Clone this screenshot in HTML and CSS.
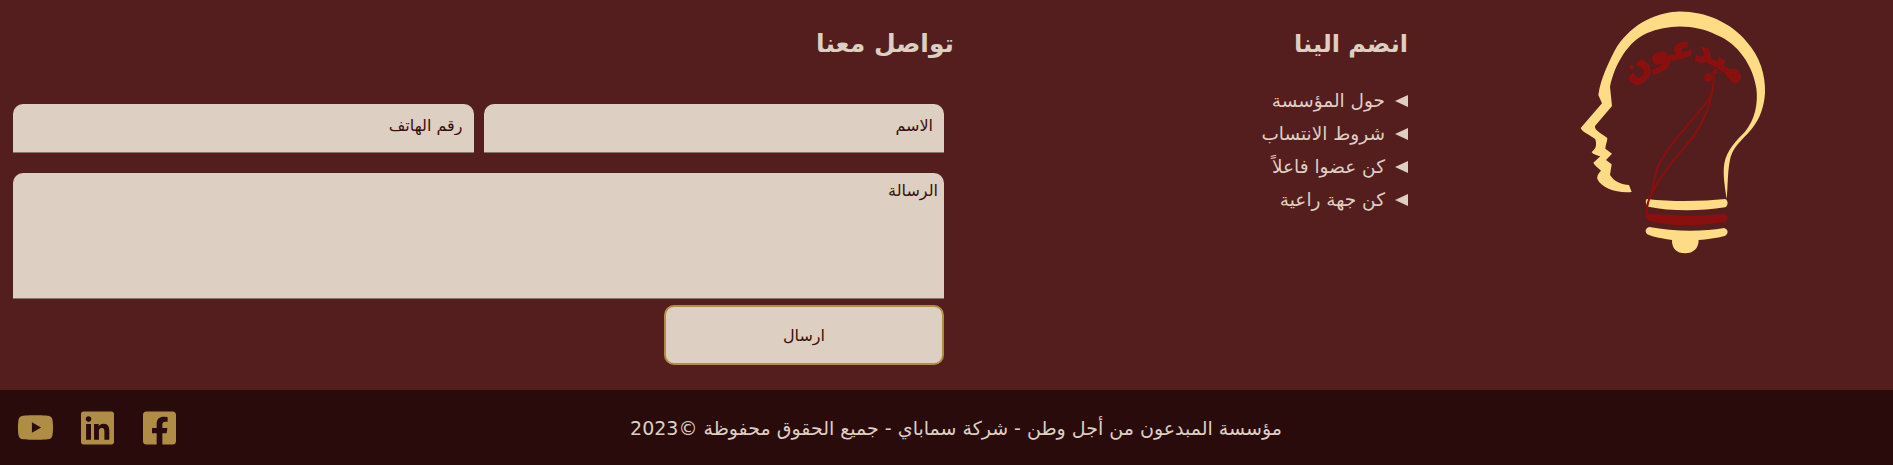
FILE: index.html
```html
<!DOCTYPE html>
<html lang="ar" dir="rtl">
<head>
    <meta charset="UTF-8">
    <title>المبدعون من أجل وطن</title>
    <link rel="stylesheet" href="styles.css">
</head>
<body>

<section class="top">
    <div class="logo-col">
        <svg class="logo" viewBox="0 0 900 810" width="300" height="270" role="img" aria-label="مبدعون">
            <path class="gold" d="M395 576C350 580 305 565 292 537C290 525 298 518 303 512C295 503 285 498 280 488L301 469C290 466 278 462 275 456C285 448 292 440 286 418C272 405 248 398 242 384L306 310L295 285C302 235 325 190 345 150C385 80 460 38 530 35C610 32 690 65 740 125C780 170 797 225 795 280C792 320 780 355 760 380C740 410 705 430 692 470C682 510 684 560 680 597C674 560 668 520 673 490C680 450 710 420 735 395C765 360 775 310 769 265C760 200 715 130 650 105C590 75 510 70 440 100C385 125 345 190 330 260L336 318L285 378C284 390 295 395 322 414C322 425 316 435 316 446L336 461L318 480L335 493L330 525C345 548 365 553 387 555Z"/>
            <path class="gold" d="M440 597C520 606 610 604 675 597C685 600 686 618 675 622C600 634 510 634 445 620C436 612 436 602 440 597Z"/>
            <path class="gold" d="M448 681C520 695 610 695 672 684C686 688 686 702 674 708C650 715 620 718 596 720C596 745 580 760 555 760C530 760 515 745 516 720C490 716 460 712 442 703C434 695 436 684 448 681Z"/>
            <path class="red" d="M445 640C520 648 610 648 675 642C686 648 686 660 675 666C600 680 510 678 445 662C437 652 438 644 445 640Z"/>
            <path class="red-line" d="M640 218C642 250 640 275 628 295C600 340 495 440 470 510C462 540 458 570 450 590"/>
            <path class="red-line" d="M640 250C635 320 600 390 555 440C520 480 480 530 450 590C442 610 438 630 440 655"/>
            <circle class="red" cx="625" cy="232" r="13"/>
            <path id="logoArc" class="arc" d="M378 350C380 228 465 178 550 178C640 178 725 228 728 350"/>
            <text class="logo-text"><textPath href="#logoArc" startOffset="50%">مبدعون</textPath></text>
        </svg>
    </div>

    <div class="links-col">
        <h2>انضم الينا</h2>
        <ul class="links">
            <li>حول المؤسسة</li>
            <li>شروط الانتساب</li>
            <li>كن عضوا فاعلاً</li>
            <li>كن جهة راعية</li>
        </ul>
    </div>

    <div class="contact-col">
        <h2>تواصل معنا</h2>
        <form class="contact-form">
            <div class="form-row">
                <input type="text" placeholder="الاسم">
                <input type="text" placeholder="رقم الهاتف">
            </div>
            <textarea placeholder="الرسالة"></textarea>
            <button type="button">ارسال</button>
        </form>
    </div>
</section>

<footer class="footer">
    <p>مؤسسة المبدعون من أجل وطن - شركة سماباي - جميع الحقوق محفوظة ©2023</p>
    <div class="social">
        <svg class="square-icon" viewBox="0 0 448 512"><path d="M400 32H48A48 48 0 0 0 0 80v352a48 48 0 0 0 48 48h137.25V327.69h-63V256h63v-54.64c0-62.15 37-96.48 93.67-96.48 27.14 0 55.52 4.84 55.52 4.84v61h-31.27c-30.81 0-40.42 19.12-40.42 38.73V256h68.78l-11 71.69h-57.78V480H400a48 48 0 0 0 48-48V80a48 48 0 0 0-48-48z"/></svg>
        <svg class="square-icon" viewBox="0 0 448 512"><path d="M416 32H31.9C14.3 32 0 46.5 0 64.3v383.4C0 465.5 14.3 480 31.9 480H416c17.6 0 32-14.5 32-32.3V64.3c0-17.8-14.4-32.3-32-32.3zM135.4 416H69V202.2h66.5V416zm-33.2-243c-21.3 0-38.5-17.3-38.5-38.5S80.9 96 102.2 96c21.2 0 38.5 17.3 38.5 38.5 0 21.3-17.2 38.5-38.5 38.5zm282.1 243h-66.4V312c0-24.8-.5-56.7-34.5-56.7-34.6 0-39.9 27-39.9 54.9V416h-66.4V202.2h63.7v29.2h.9c8.9-16.8 30.6-34.5 62.9-34.5 67.2 0 79.7 44.3 79.7 101.9V416z"/></svg>
        <svg class="wide-icon" viewBox="0 0 576 512"><path d="M549.655 124.083c-6.281-23.65-24.787-42.276-48.284-48.597C458.781 64 288 64 288 64S117.22 64 74.629 75.486c-23.497 6.322-42.003 24.947-48.284 48.597-11.412 42.867-11.412 132.305-11.412 132.305s0 89.438 11.412 132.305c6.281 23.65 24.787 41.5 48.284 47.821C117.22 448 288 448 288 448s170.78 0 213.371-11.486c23.497-6.321 42.003-24.171 48.284-47.821 11.412-42.867 11.412-132.305 11.412-132.305s0-89.438-11.412-132.305zm-317.51 213.508V175.185l142.739 81.205-142.739 81.201z"/></svg>
    </div>
</footer>

</body>
</html>
```

FILE: styles.css
```css
body {
    margin: 0;
    background-color: #541e1e;
    color: #ddcfc1;
    font-family: "DejaVu Sans", sans-serif;
}
.top {
    display: flex;
    height: 390px;
}
.logo-col {
    flex: none;
    width: 473px;
    padding-right: 93px;
    box-sizing: border-box;
}
.logo {
    display: block;
}
.gold {
    fill: #fedc85;
}
.red {
    fill: #8a0f0f;
}
.red-line {
    fill: none;
    stroke: #8a0f0f;
    stroke-width: 6;
}
.arc {
    fill: none;
}
.logo-text {
    fill: #8a0f0f;
    stroke: #8a0f0f;
    stroke-width: 5;
    font-size: 96px;
    font-weight: bold;
    letter-spacing: 16px;
    text-anchor: middle;
}
.links-col {
    flex: none;
    width: 473px;
    padding-right: 12px;
    box-sizing: border-box;
}
h2 {
    margin: 24px 0 0;
    font-size: 25px;
    line-height: 40px;
    font-weight: bold;
}
.links-col h2 {
    font-size: 24px;
}
.links {
    list-style: none;
    margin: 20px 0 0;
    padding: 0;
    font-size: 18.5px;
}
.links li {
    display: flex;
    align-items: center;
    gap: 10px;
    height: 33px;
}
.links li::before {
    content: "";
    flex: none;
    width: 0;
    height: 0;
    border-top: 6.5px solid transparent;
    border-bottom: 6.5px solid transparent;
    border-right: 13px solid #ddcfc1;
}
.contact-col {
    flex: none;
    width: 947px;
    box-sizing: border-box;
    padding: 0 3px 0 13px;
}
.contact-col h2 {
    margin-right: -10px;
}
.contact-form {
    margin-top: 40px;
    display: flex;
    flex-direction: column;
    align-items: flex-start;
}
.form-row {
    display: flex;
    gap: 10px;
    width: 100%;
}
input, textarea {
    box-sizing: border-box;
    background-color: #ddcfc1;
    border: 0;
    border-bottom: 1px solid #85776a;
    border-radius: 10px 10px 0 0;
    font-family: "DejaVu Sans", sans-serif;
    font-size: 16px;
    color: #3a0f10;
}
input {
    flex: 1;
    min-width: 0;
    height: 49px;
    padding: 0 11px 6px;
}
textarea {
    display: block;
    width: 100%;
    height: 126px;
    margin-top: 20px;
    padding: 8px 6px 0;
    resize: none;
}
input::placeholder, textarea::placeholder {
    color: #3a0f10;
    opacity: 1;
}
button {
    width: 280px;
    height: 60px;
    margin-top: 6px;
    background-color: #ddcfc1;
    border: 2px solid #b08d45;
    border-radius: 10px;
    font-family: "DejaVu Sans", sans-serif;
    font-size: 16px;
    color: #3a0f10;
    cursor: pointer;
}
.footer {
    height: 75px;
    background-color: #2a0b0c;
    display: flex;
    align-items: center;
    padding: 0 17px;
}
.footer p {
    flex: 1;
    margin: 0;
    padding-right: 140px;
    text-align: center;
    font-size: 19px;
}
.social {
    display: flex;
    align-items: center;
    gap: 29px;
}
.social svg {
    fill: #b08d45;
}
.square-icon {
    width: 33px;
    height: 38px;
}
.wide-icon {
    width: 37px;
    height: 33px;
    margin-right: -2px;
}
```
